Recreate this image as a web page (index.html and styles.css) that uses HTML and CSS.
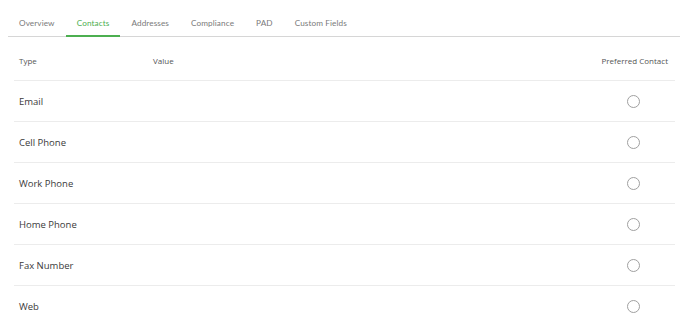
FILE: index.html
```html
<!DOCTYPE html>
<html lang="en">
<head>
    <meta charset="UTF-8">
    <title>Contacts</title>
    <link rel="stylesheet" href="styles.css">
</head>
<body>
    <ul class="tabs">
        <li class="tab">Overview</li>
        <li class="tab tab-active">Contacts</li>
        <li class="tab">Addresses</li>
        <li class="tab">Compliance</li>
        <li class="tab">PAD</li>
        <li class="tab">Custom Fields</li>
    </ul>

    <table class="contacts">
        <thead>
            <tr>
                <th class="col-type">Type</th>
                <th class="col-value">Value</th>
                <th class="col-pref">Preferred Contact</th>
            </tr>
        </thead>
        <tbody>
            <tr><td>Email</td><td></td><td class="col-pref"><span class="radio"></span></td></tr>
            <tr><td>Cell Phone</td><td></td><td class="col-pref"><span class="radio"></span></td></tr>
            <tr><td>Work Phone</td><td></td><td class="col-pref"><span class="radio"></span></td></tr>
            <tr><td>Home Phone</td><td></td><td class="col-pref"><span class="radio"></span></td></tr>
            <tr><td>Fax Number</td><td></td><td class="col-pref"><span class="radio"></span></td></tr>
            <tr class="last"><td>Web</td><td></td><td class="col-pref"><span class="radio"></span></td></tr>
        </tbody>
    </table>
</body>
</html>
```

FILE: styles.css
```css
* {
    box-sizing: border-box;
}

body {
    margin: 8px;
    background: #fff;
    font-family: 'Open Sans', sans-serif;
    color: #333;
}

/* Tab strip */
.tabs {
    display: flex;
    margin: 0;
    padding: 0;
    list-style: none;
    border-bottom: 1px solid #d6d6d6;
}

.tab {
    padding: 9px 11px 6px;
    font-family: 'Lato', sans-serif;
    font-size: 8.2px;
    line-height: 13px;
    color: #7a7a7a;
    letter-spacing: 0.1px;
}

.tab-active {
    color: #4caf50;
    border-bottom: 2px solid #4caf50;
    margin-bottom: -1px;
    padding-bottom: 5px;
}

/* Contacts table */
.contacts {
    width: 661px;
    margin: 0 5px 0 6px;
    border-collapse: collapse;
    table-layout: fixed;
}

.contacts th {
    padding: 18px 5px 13px;
    font-size: 8px;
    line-height: 12px;
    font-weight: 400;
    color: #555;
    text-align: left;
    white-space: nowrap;
    border-bottom: 1px solid #ececec;
}

.contacts td {
    height: 41px;
    padding: 0 5px;
    font-size: 9.5px;
    color: #3a3a3a;
    border-bottom: 1px solid #ececec;
    vertical-align: middle;
}

.contacts tr.last td {
    border-bottom: none;
}

.col-type {
    width: 134px;
}

.contacts .col-pref {
    width: 82px;
    padding-right: 7px;
    text-align: right;
}

.contacts td.col-pref {
    text-align: center;
    padding: 0 2px 0 0;
}

.radio {
    display: inline-block;
    width: 13px;
    height: 13px;
    border: 1px solid #a0a0a0;
    border-radius: 50%;
    vertical-align: middle;
}
```
